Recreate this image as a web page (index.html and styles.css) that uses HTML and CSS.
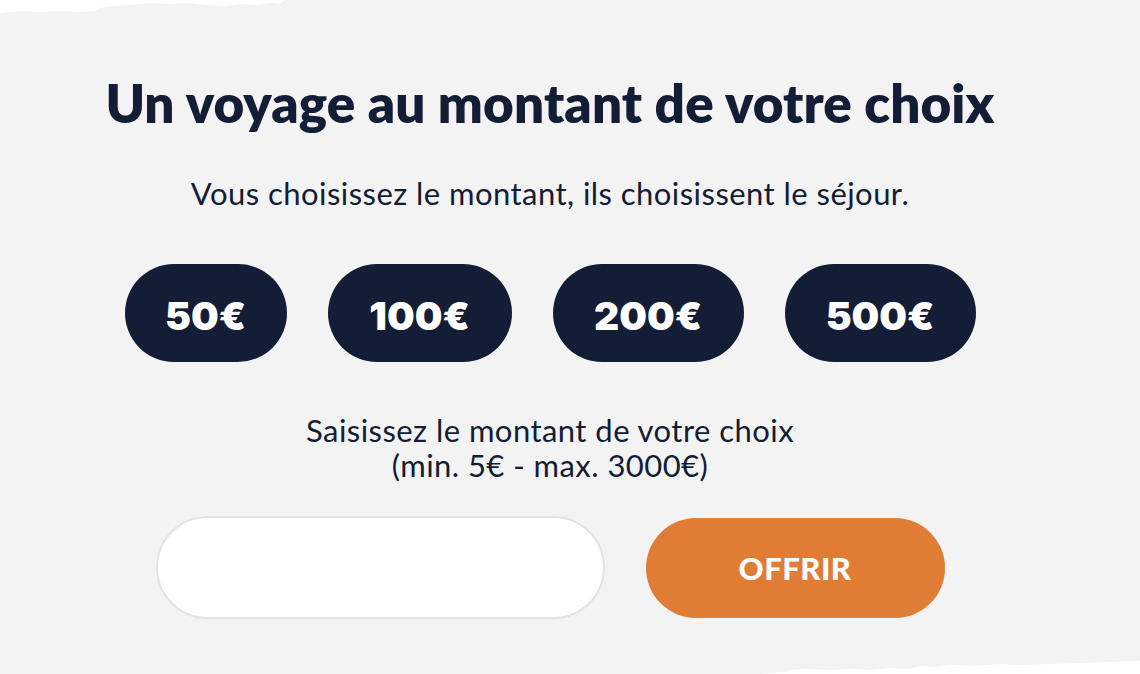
FILE: index.html
```html
<!DOCTYPE html>
<html lang="fr">
<head>
<meta charset="utf-8">
<title>Un voyage au montant de votre choix</title>
<link rel="stylesheet" href="styles.css">
</head>
<body>
<svg class="edge edge-top" width="300" height="16" viewBox="0 0 300 16" aria-hidden="true">
  <path d="M0 0 H285 L280 4 270 3 255 5 240 4 225 6 205 5 190 3 170 4 150 3 130 5 110 6 100 8 95 11 80 12 60 11 40 12 20 11 0 13 Z" fill="#ffffff"/>
</svg>
<svg class="edge edge-bottom" width="380" height="14" viewBox="0 0 380 14" aria-hidden="true">
  <path d="M0 14 L10 13 25 12 30 10 45 9 70 10 90 9 110 10 130 8 150 9 160 6 175 7 190 5 215 6 240 4 260 5 290 4 320 3 350 2 380 1 V14 Z" fill="#ffffff"/>
</svg>
<main class="page">
  <h1 class="title">Un voyage au montant de votre choix</h1>
  <p class="subtitle">Vous choisissez le montant, ils choisissent le séjour.</p>
  <div class="amounts">
    <button class="amount amount-50">50€</button>
    <button class="amount amount-100">100€</button>
    <button class="amount">200€</button>
    <button class="amount">500€</button>
  </div>
  <p class="label">Saisissez le montant de votre choix<br>(min. 5€ - max. 3000€)</p>
  <div class="custom">
    <input class="field" type="text" aria-label="Montant">
    <button class="offer">OFFRIR</button>
  </div>
</main>
</body>
</html>
```
FILE: styles.css
```css
* { box-sizing: border-box; }
html, body { margin: 0; padding: 0; }
body {
  background: #f2f3f2;
  color: #131d35;
  font-family: "Lato", "Open Sans", sans-serif;
  width: 1140px;
  height: 674px;
  overflow: hidden;
  position: relative;
}
.edge { position: absolute; display: block; }
.edge-top { top: 0; left: 0; }
.edge-bottom { bottom: 0; right: 0; }
.page {
  width: 1100px;
  display: flex;
  flex-direction: column;
  align-items: center;
  padding-top: 71px;
}
.title {
  margin: 0;
  font-size: 53px;
  font-weight: 800;
  line-height: 64px;
  letter-spacing: 0.1px;
}
.subtitle {
  margin: 39px 0 0;
  font-size: 31px;
  line-height: 38px;
  letter-spacing: 0.45px;
}
.amounts {
  display: flex;
  gap: 41px;
  margin-top: 52px;
}
.amount {
  height: 98px;
  min-width: 191px;
  padding: 4px 30px 0;
  border: 0;
  border-radius: 49px;
  background: #131d35;
  color: #fff;
  font-family: "Inter", sans-serif;
  font-weight: 900;
  font-size: 39px;
  letter-spacing: 0;
}
.amount-50 { min-width: 162px; }
.amount-100 { min-width: 184px; }
.label {
  margin: 51px 0 0;
  text-align: center;
  font-size: 31px;
  line-height: 35px;
  letter-spacing: 0.45px;
}
.custom {
  display: flex;
  gap: 41px;
  margin-top: 33px;
  align-items: center;
}
.field {
  width: 449px;
  height: 103px;
  border: 2px solid #e3e3e3;
  border-radius: 52px;
  background: #fff;
}
.offer {
  width: 299px;
  height: 100px;
  border: 0;
  border-radius: 50px;
  background: #e07c34;
  color: #fff;
  font-family: "Lato", sans-serif;
  font-weight: 900;
  font-size: 31px;
  letter-spacing: 0.5px;
}
```
